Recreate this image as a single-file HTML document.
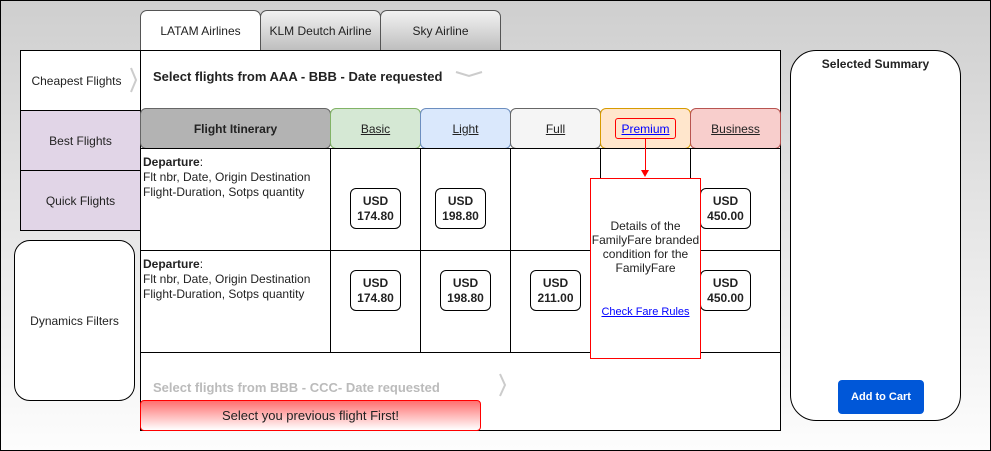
<!DOCTYPE html><html><head><style>
*{box-sizing:border-box;margin:0;padding:0}
body{width:991px;height:451px;position:relative;overflow:hidden;font-family:"Liberation Sans",Arial,sans-serif;font-size:12px;color:#222}
.a{position:absolute}
.bg{left:0;top:0;width:991px;height:451px;border:1px solid #000;background:linear-gradient(#cfcfcf,#fdfdfd)}
.tab{top:10px;height:41px;width:121px;border:1px solid #555;border-bottom:none;border-radius:7px 7px 0 0;display:flex;align-items:center;justify-content:center;background:linear-gradient(#f2f2f2,#bdbdbd)}
.c{display:flex;align-items:center;justify-content:center;text-align:center}
.hd{top:108px;height:41px;border:1px solid;border-radius:6px;text-decoration:underline}
.vl{width:1px;background:#000}
.hl{height:1px;background:#000;left:140px;width:640px}
.p{width:51px;height:41px;border:1px solid #000;border-radius:6px;background:#fff;font-weight:bold;line-height:15px}
.dt{left:143px;line-height:15px;font-size:12px}
</style></head><body>
<div class="a bg"></div>
<div class="a tab" style="left:140px;background:#fff">LATAM Airlines</div>
<div class="a tab" style="left:260px">KLM Deutch Airline</div>
<div class="a tab" style="left:380px">Sky Airline</div>
<div class="a" style="left:140px;top:50px;width:641px;height:381px;background:#fff;border:1px solid #000"></div>
<div class="a c" style="left:20px;top:50px;width:121px;height:61px;background:#fff;border:1px solid #000;padding-right:8px">Cheapest Flights</div>
<svg class="a" style="left:128px;top:66px" width="12" height="28"><polyline points="3,2 8,14 3,26" fill="none" stroke="#ccc" stroke-width="2"/></svg>
<div class="a c" style="left:20px;top:110px;width:121px;height:61px;background:#e1d5e7;border:1px solid #000">Best Flights</div>
<div class="a c" style="left:20px;top:170px;width:121px;height:61px;background:#e1d5e7;border:1px solid #000">Quick Flights</div>
<div class="a c" style="left:14px;top:240px;width:121px;height:161px;background:#fff;border:1px solid #000;border-radius:16px">Dynamics Filters</div>
<div class="a" style="left:153px;top:69px;font-weight:bold;font-size:13px">Select flights from AAA - BBB - Date requested</div>
<svg class="a" style="left:454px;top:69px" width="30" height="10"><polyline points="2,3 15,7 28,3" fill="none" stroke="#ccc" stroke-width="2"/></svg>
<div class="a hd c" style="left:140px;width:191px;background:#b3b3b3;border-color:#666;text-decoration:none;font-weight:bold">Flight Itinerary</div>
<div class="a hd c" style="left:330px;width:91px;background:#d5e8d4;border-color:#82b366">Basic</div>
<div class="a hd c" style="left:420px;width:91px;background:#dae8fc;border-color:#6c8ebf">Light</div>
<div class="a hd c" style="left:510px;width:91px;background:#f5f5f5;border-color:#666">Full</div>
<div class="a hd c" style="left:600px;width:91px;background:#ffe6cc;border-color:#d79b00"></div>
<div class="a c" style="left:615px;top:118px;width:61px;height:21px;border:1px solid #f00;border-radius:3px;color:#00f;text-decoration:underline">Premium</div>
<div class="a hd c" style="left:690px;width:91px;background:#f8cecc;border-color:#b85450">Business</div>
<div class="a hl" style="top:148px"></div><div class="a hl" style="top:250px"></div><div class="a hl" style="top:352px"></div>
<div class="a vl" style="left:330px;top:148px;height:204px"></div>
<div class="a vl" style="left:420px;top:148px;height:204px"></div>
<div class="a vl" style="left:510px;top:148px;height:204px"></div>
<div class="a vl" style="left:600px;top:148px;height:204px"></div>
<div class="a vl" style="left:690px;top:148px;height:204px"></div>
<div class="a dt" style="top:155px"><b>Departure</b>:<br>Flt nbr, Date, Origin Destination<br>Flight-Duration, Sotps quantity</div>
<div class="a dt" style="top:257px"><b>Departure</b>:<br>Flt nbr, Date, Origin Destination<br>Flight-Duration, Sotps quantity</div>
<div class="a p c" style="left:350px;top:188px">USD<br>174.80</div>
<div class="a p c" style="left:435px;top:188px">USD<br>198.80</div>
<div class="a p c" style="left:700px;top:188px">USD<br>450.00</div>
<div class="a p c" style="left:350px;top:270px">USD<br>174.80</div>
<div class="a p c" style="left:440px;top:270px">USD<br>198.80</div>
<div class="a p c" style="left:530px;top:270px">USD<br>211.00</div>
<div class="a p c" style="left:700px;top:270px">USD<br>450.00</div>
<div class="a" style="left:645px;top:139px;width:1px;height:33px;background:#f00"></div>
<div class="a" style="left:641px;top:170px;border-left:4px solid transparent;border-right:4px solid transparent;border-top:7px solid #f00"></div>
<div class="a" style="left:590px;top:178px;width:111px;height:181px;border:1px solid #f00;background:#fff;text-align:center;line-height:14px">
<div style="margin-top:40px">Details of the FamilyFare branded condition for the FamilyFare</div>
<div style="margin-top:30px;color:#00f;text-decoration:underline;font-size:11px">Check Fare Rules</div></div>
<div class="a" style="left:153px;top:380px;font-weight:bold;font-size:13px;color:#bbb">Select flights from BBB - CCC- Date requested</div>
<svg class="a" style="left:497px;top:372px" width="12" height="28"><polyline points="3,2 8,13 3,24" fill="none" stroke="#ccc" stroke-width="2"/></svg>
<div class="a c" style="left:140px;top:400px;width:341px;height:31px;border:1px solid #f00;border-radius:4px;background:linear-gradient(#ff7070,#fff);font-size:13px">Select you previous flight First!</div>
<div class="a" style="left:790px;top:50px;width:171px;height:371px;background:#fff;border:1px solid #000;border-radius:26px"></div>
<div class="a" style="left:790px;top:57px;width:171px;text-align:center;font-weight:bold">Selected Summary</div>
<div class="a c" style="left:838px;top:380px;width:86px;height:34px;background:#0057d8;color:#fff;font-weight:bold;border-radius:4px;font-size:11px">Add to Cart</div>
</body></html>
